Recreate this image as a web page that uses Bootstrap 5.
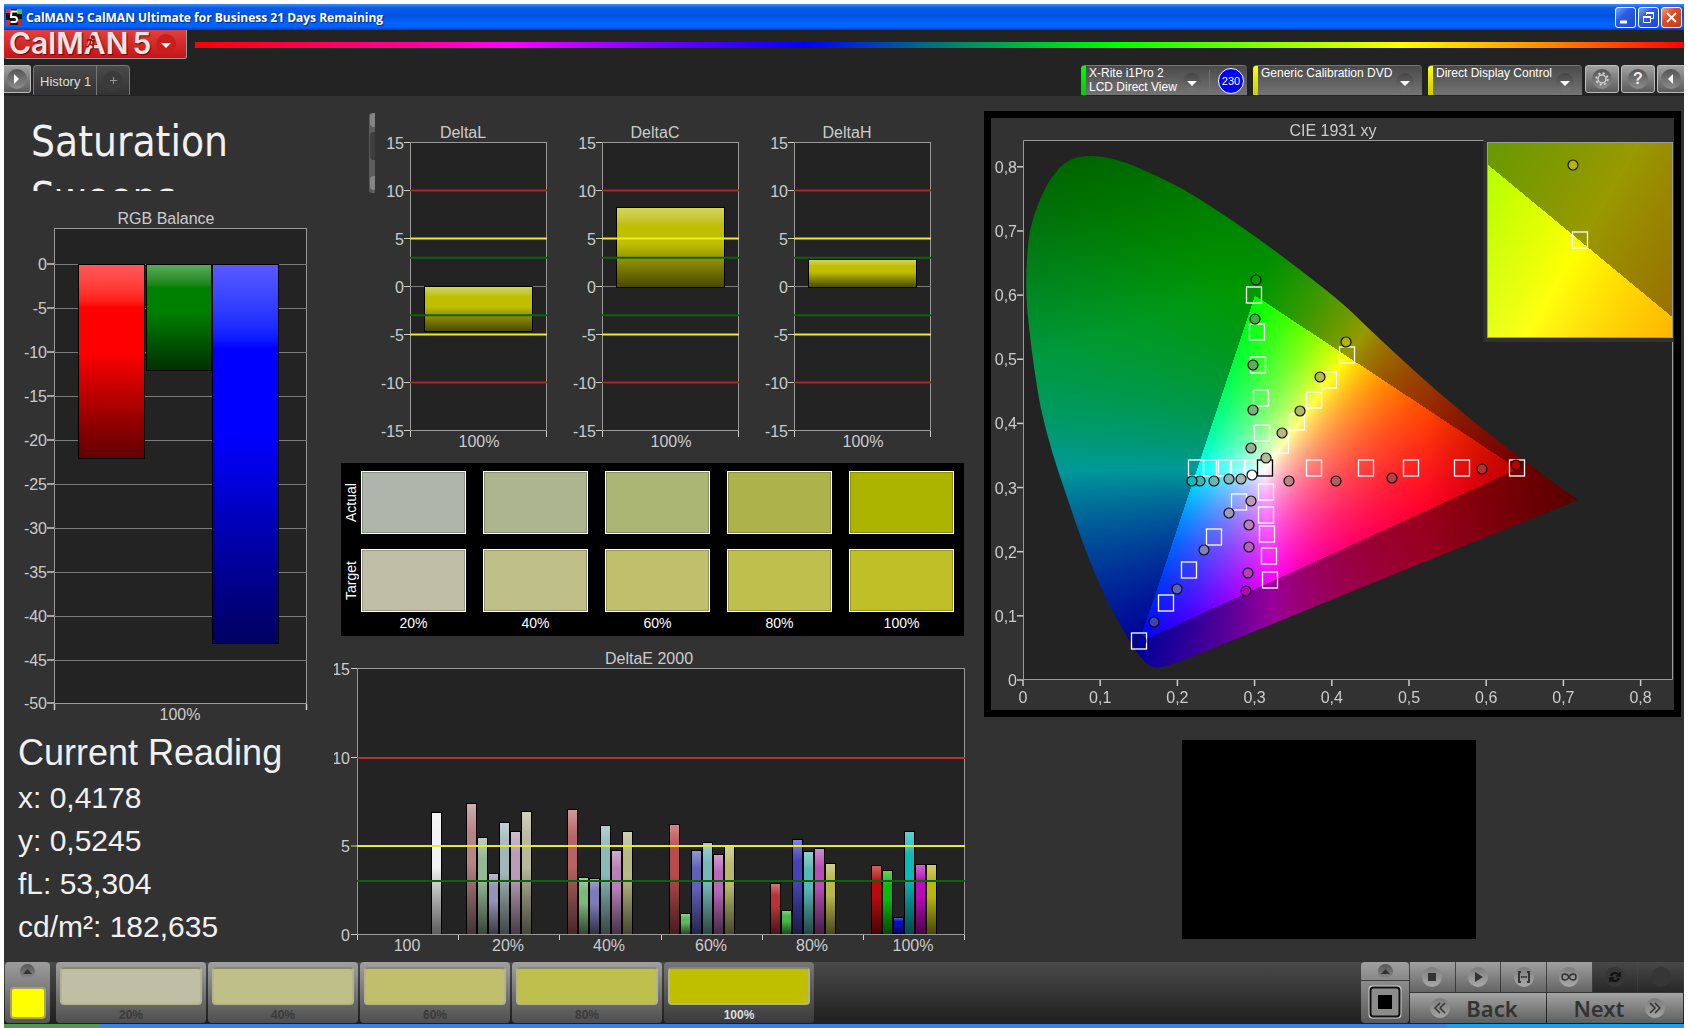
<!DOCTYPE html>
<html lang="en">
<head>
<meta charset="utf-8">
<meta name="viewport" content="width=device-width, initial-scale=1">
<title>CalMAN 5</title>
<link rel="stylesheet" href="https://cdn.jsdelivr.net/npm/bootstrap@5.3.0/dist/css/bootstrap.min.css">
<style>
  body { background: #fff; padding: 4px 4px 0 4px; font-family: "Liberation Sans", Arial, sans-serif; color: #eee; }
  button { border: 0; padding: 0; color: inherit; font-family: inherit; }
  svg { display: block; }
  .app-shell { background: #323232; min-height: calc(100vh - 4px); }
  .gap-hair { column-gap: 1px; }
  .gap-thin { column-gap: 2px; }

  .title-bar { height: 26px; padding: 0 2px; background: linear-gradient(#3d8df7 0, #0a5cea 15%, #0053e1 45%, #0066ff 75%, #0062fb 88%, #003bc4 100%); }
  .title-text { font: 700 12px/20px "Open Sans", sans-serif; margin: 2px 0 0 4px; color: #fff; text-shadow: 1px 1px 1px #0a2a80; }
  .win-btn { width: 21px; height: 21px; border: 1px solid #fff; border-radius: 3px; background: linear-gradient(135deg, #7ba3f5, #2a5be0 40%, #1c4bd0); }
  .win-close { background: linear-gradient(135deg, #f0a080, #dc4c26 40%, #c43c14); }

  .app-header { background: #232323; height: 66px; padding-bottom: 1px; }
  .logo-btn { width: 183px; height: 29px; background: linear-gradient(#e04040, #c81414); border: 1px solid #999; border-width: 0 1px 1px 0; border-radius: 0 0 3px 3px; overflow: hidden; padding: 0 5px; }
  .logo-text { font: 600 30px/26px Inter, sans-serif; color: #e6e6e6; text-shadow: 1px 1px 1px #700; margin-top: -3px; }
  .logo-figure { left: 80px; top: 5px; }
  .spectrum { height: 6px; margin-top: 12px; background: linear-gradient(90deg, #f00 0, #f0a 16%, #f0f 21%, #60f 32%, #00f 41%, #077 50%, #0f0 62%, #8f0 72%, #ff0 81%, #f80 91%, #f00 100%); }
  .tab-row { height: 30px; }
  .tool-btn { width: 34px; height: 28px; border: 1px solid #bbb; border-radius: 3px; background: linear-gradient(#a0a0a0, #5c5c5c); }
  .edge-left { width: 27px; border-left: 0; border-radius: 0 3px 3px 0; }
  .edge-right { width: 27px; border-right: 0; border-radius: 3px 0 0 3px; }
  .round-icon { width: 20px; height: 20px; border-radius: 50%; background: linear-gradient(#555, #8c8c8c); display: flex; align-items: center; justify-content: center; }
  .tab-box { background: linear-gradient(#4a4a4a, #333); border: 1px solid #777; border-width: 1px 1px 0 1px; border-radius: 4px 4px 0 0; margin-left: 2px; width: 97px; }
  .tab-name { font-size: 13px; padding: 2px 6px 0; background: none; border-right: 1px solid #777; width: 63px; white-space: nowrap; color: #ddd; }
  .tab-add { background: none; flex: 1; }
  .tab-add .round-icon { background: #3a3a3a; color: #999; }
  .device-box { background: linear-gradient(#4a4a4a, #747474); border-radius: 4px 4px 0 0; border-top: 1px solid #777; font-size: 12px; line-height: 14px; color: #fff; text-align: left; }
  .device-box .round-icon { width: 18px; height: 18px; background: linear-gradient(#444, #757575); margin-top: 7px; padding-top: 3px; }
  .device-led { width: 5px; align-self: stretch; border-radius: 3px 0 0 0; margin-right: 3px; }
  .led-green { background: linear-gradient(#0f0, #0c0); }
  .led-yellow { background: linear-gradient(#ff0, #cc0); }
  .device-open { background: none; text-align: left; display: flex; flex: 1; line-height: 14px; white-space: nowrap; }
  .dev-a { width: 166px; } .dev-b { width: 169px; margin-left: 6px; } .dev-c { width: 154px; margin-left: 6px; }
  .reading-dot { width: 26px; height: 26px; border-radius: 50%; background: #00f; border: 1px solid #fff; font-size: 11px; line-height: 24px; text-align: center; margin: 2px 3px 0 0; }
  .tool-set { margin-left: 3px; }

  .col-left { flex: 330 1 0; min-width: 0; } .col-mid { flex: 640 1 0; min-width: 0; } .col-right { flex: 710 1 0; min-width: 0; padding-top: 15px; }
  .page-title { font: 400 42px/56px "DejaVu Sans Condensed", "DejaVu Sans", sans-serif; height: 95px; padding: 18px 0 0 27px; overflow: hidden; margin: 0; color: #f0f0f0; }
  .rgb-chart { margin-top: 14px; }
  .reading h2 { font-size: 36px; line-height: 46px; margin: 0; }
  .reading { padding-left: 14px; color: #f0f0f0; }
  .reading p { font-size: 30px; line-height: 43px; margin: 0; }
  .scroll-track { width: 6px; height: 80px; background: #5c5c5c; border-radius: 3px 0 0 3px; margin: 13px 1px 0 35px; }
  .scroll-track i { display: block; width: 5px; margin-left: 1px; border-radius: 4px 0 0 4px; background: #858585; height: 14px; }
  .scroll-track i:nth-child(2) { background: #3e3e3e; height: 28px; margin: 5px 0 16px 1px; }
  .delta-cell { flex: 192 1 0; }
  .delta-tail { flex: 22 1 0; }

  .swatch-panel { background: #000; margin: 4px 10px 7px 7px; padding: 8px 10px 0 0; color: #fff; font-size: 14px; }
  .swatch-line { display: flex; gap: 17px; }
  .swatch-target { margin-top: 15px; }
  .swatch-name { width: 20px; margin-right: -17px; writing-mode: vertical-rl; transform: rotate(180deg); text-align: center; line-height: 20px; }
  .swatch-chip { flex: 1; height: 63px; border: 1px solid #fff; box-shadow: inset 0 0 0 1px #0003; }
  .swatch-cap { flex: 1; text-align: center; line-height: 23px; height: 24px; }

  .cie-panel { border: 7px solid #000; position: relative; margin: 0 3px 0 10px; }
  .cie-panel canvas { position: absolute; left: 0; top: 0; width: 100%; height: 100%; }
  .cie-panel svg { position: relative; }
  .pattern-view { width: 294px; height: 199px; background: #000; margin: 23px auto 0; }

  .dock { background: linear-gradient(#4a4a4a, #1f1f1f); padding: 0 1px; height: 62px; }
  .dock-left { width: 45px; height: 61px; border-radius: 4px; background: linear-gradient(#9c9c9c, #555); padding: 2px 5px 0; margin-right: 6px; }
  .dock-left .round-icon, .stop-head .round-icon { width: 15px; height: 15px; }
  .current-chip { width: 36px; height: 32px; border: 2px solid #aaa55a; border-radius: 4px; background: #ff0; margin-top: 8px; }
  .level-btn { width: 150px; height: 61px; border-radius: 4px; background: linear-gradient(#a0a0a0, #4e4e4e); font-size: 12px; font-weight: 700; color: #3a3a3a; padding: 5px 4px 0; margin-right: 2px; line-height: 20px; }
  .level-btn span { display: block; height: 38px; border-radius: 4px; border: 2px solid #b4b48c; border-top-color: #8a8a68; }
  .level-on { background: linear-gradient(#777, #3a3a3a); color: #ddd; }
  .stop-block { width: 48px; margin-right: 1px; }
  .stop-head { height: 18px; background: linear-gradient(#a0a0a0, #888); border-radius: 4px 4px 0 0; }
  .stop-body { height: 42px; margin-top: 1px; background: linear-gradient(#8c8c8c, #5a5a5a); border-radius: 0 0 4px 4px; }
  .media-col { width: 273px; gap: 1px; }
  .media-btn { flex: 1; height: 30px; background: linear-gradient(#a0a0a0, #646464); }
  .media-btn .round-icon { background: linear-gradient(#7c7c7c, #aaa); }
  .media-off { background: linear-gradient(#484848, #282828); }
  .media-off .round-icon { background: #363636; }
  .nav-btn { flex: 1; height: 30px; background: linear-gradient(#a4a4a4, #5e5e5e); color: #333; font: 600 22px/28px "Noto Sans", sans-serif; }
  .nav-btn .round-icon { background: linear-gradient(#7c7c7c, #a4a4a4); }
  .nav-back { gap: 16px; padding-right: 8px; }
  .nav-next { gap: 20px; padding-left: 8px; }
  .task-strip { height: 4px; background: linear-gradient(90deg, #4f9a4f 96px, #3b82e8 96px 1443px, #1aa0f0 1443px); }
</style>
<script src="https://cdn.jsdelivr.net/npm/bootstrap@5.3.0/dist/js/bootstrap.bundle.min.js"></script>
</head>
<body>
<div class="app-shell d-flex flex-column">
  <header>
    <div class="title-bar d-flex align-items-center">
      <svg width="16" height="16" viewBox="0 0 16 16" aria-hidden="true"><rect width="16" height="16" fill="#111"/><path d="M0 0h5v4H0z" fill="#e33"/><path d="M11 0h5v5h-5z" fill="#3c3"/><path d="M0 11h4v5H0z" fill="#c33"/><path d="M12 10h4v6h-4z" fill="#c22"/><path d="M11.500 2.500H5.500L5 8h3.500q2.500 0 2.500 2.500T8.500 13H4.500" fill="none" stroke="#fff" stroke-width="2"/></svg>
      <h1 class="title-text flex-grow-1">CalMAN 5 CalMAN Ultimate for Business 21 Days Remaining</h1>
      <div class="d-flex gap-thin">
        <button class="win-btn" aria-label="Minimize"><svg width="19" height="19"><path d="M4 14h7" stroke="#fff" stroke-width="3"/></svg></button>
        <button class="win-btn" aria-label="Restore"><svg width="19" height="19" fill="none" stroke="#fff"><path d="M7.500 7V4.500h7v6H12"/><path d="M7 5h8" stroke-width="2"/><path d="M4.500 8.500h7v6h-7z"/><path d="M4 9h8" stroke-width="2"/></svg></button>
        <button class="win-btn win-close" aria-label="Close"><svg width="19" height="19"><path d="M5 5l9 9M14 5l-9 9" stroke="#fff" stroke-width="2"/></svg></button>
      </div>
    </div>
    <div class="app-header d-flex flex-column">
      <div class="d-flex">
        <button class="logo-btn d-flex align-items-center position-relative" aria-label="CalMAN 5 menu">
          <span class="logo-text">CalMAN</span><span class="logo-text ms-1">5</span>
          <svg class="logo-figure position-absolute" width="14" height="15" viewBox="0 0 12 14" fill="none" stroke="#a01010" stroke-width="1.500"><circle cx="7.500" cy="2" r="1" fill="#a01010"/><path d="M2 5l4-1 2 2 2-1M6 4L5 8l3 2v3M5 8l-2 3H1"/></svg>
          <svg class="ms-auto me-1" width="22" height="22"><circle cx="11" cy="11" r="10" fill="#c81e1e"/><path d="M6 10h10l-5 5z" fill="#fff"/></svg>
        </button>
        <div class="spectrum flex-grow-1 ms-2"></div>
      </div>
      <div class="tab-row d-flex mt-auto">
        <button class="tool-btn edge-left d-flex align-items-center justify-content-center" aria-label="Expand left"><span class="round-icon"><svg width="8" height="10"><path d="M1 0l5 5-5 5z" fill="#fff"/></svg></span></button>
        <div class="tab-box d-flex">
          <button class="tab-name">History 1</button>
          <button class="tab-add d-flex align-items-center justify-content-center" aria-label="Add tab"><span class="round-icon"><svg width="7" height="7"><path d="M3.500 0v7M0 3.500h7" stroke="#999"/></svg></span></button>
        </div>
        <div class="d-flex ms-auto">
          <div class="device-box dev-a d-flex">
            <span class="device-led led-green"></span>
            <button class="device-open">X-Rite i1Pro 2<br>LCD Direct View<span class="round-icon ms-auto me-2"><svg width="10" height="6"><path d="M0 0h10L5 5z" fill="#fff"/></svg></span></button>
            <span class="border-start border-secondary my-1 me-2"></span><span class="reading-dot">230</span>
          </div>
          <div class="device-box dev-b d-flex"><span class="device-led led-yellow"></span>
            <button class="device-open">Generic Calibration DVD<span class="round-icon ms-auto me-2"><svg width="10" height="6"><path d="M0 0h10L5 5z" fill="#fff"/></svg></span></button></div>
          <div class="device-box dev-c d-flex"><span class="device-led led-yellow"></span>
            <button class="device-open">Direct Display Control<span class="round-icon ms-auto me-2"><svg width="10" height="6"><path d="M0 0h10L5 5z" fill="#fff"/></svg></span></button></div>
          <div class="tool-set d-flex gap-thin">
            <button class="tool-btn d-flex align-items-center justify-content-center" aria-label="Settings"><span class="round-icon"><svg width="16" height="16" viewBox="-8 -8 16 16" fill="none" stroke="#ccc"><circle r="4" stroke-width="1.500"/><circle r="5.700" stroke-width="2" stroke-dasharray="2.230 2.230"/></svg></span></button>
            <button class="tool-btn d-flex align-items-center justify-content-center fw-bold" aria-label="Help"><span class="round-icon">?</span></button>
            <button class="tool-btn edge-right d-flex align-items-center justify-content-center" aria-label="Collapse right"><span class="round-icon"><svg width="8" height="10"><path d="M6 0L1 5l5 5z" fill="#fff"/></svg></span></button>
          </div>
        </div>
      </div>
    </div>
  </header>

  <main class="d-flex flex-grow-1">
    <section class="col-left">
      <h2 class="page-title">Saturation<br>Sweeps</h2>
      <div id="rgbChart" class="rgb-chart"></div>
      <div class="reading">
        <h2>Current Reading</h2>
        <p>x: 0,4178</p><p>y: 0,5245</p><p>fL: 53,304</p><p>cd/m²: 182,635</p>
      </div>
    </section>

    <section class="col-mid">
      <div class="d-flex pt-1">
        <div class="scroll-track"><i></i><i></i><i></i></div>
        <div class="delta-cell" id="deltaL"></div>
        <div class="delta-cell" id="deltaC"></div>
        <div class="delta-cell" id="deltaH"></div>
        <div class="delta-tail"></div>
      </div>
      <div class="swatch-panel" id="swatches"></div>
      <div id="deltaE"></div>
    </section>

    <section class="col-right">
      <div class="cie-panel"><canvas id="cieCanvas" width="683" height="592"></canvas><div id="cieChart"></div></div>
      <div class="pattern-view"></div>
    </section>
  </main>

  <footer>
    <div class="dock d-flex">
      <button class="dock-left d-flex flex-column align-items-center" aria-label="Current color"><span class="round-icon"><svg width="9" height="5"><path d="M0 5h9L4.500 0z" fill="#333"/></svg></span><span class="current-chip"></span></button>
      <div class="d-flex" id="levels"></div>
      <div class="d-flex ms-auto">
        <div class="stop-block">
          <button class="stop-head w-100 d-flex align-items-center justify-content-center" aria-label="Expand"><span class="round-icon"><svg width="9" height="5"><path d="M0 5h9L4.500 0z" fill="#333"/></svg></span></button>
          <button class="stop-body w-100 d-flex align-items-center justify-content-center" aria-label="Pattern window"><svg width="34" height="34"><rect x=".5" y=".5" width="33" height="33" rx="4" fill="#ccc"/><rect x="2.500" y="2.500" width="29" height="29" rx="3" fill="#8c8c8c" stroke="#111" stroke-width="2"/><path d="M10 10h14v14H10z" fill="#000"/></svg></button>
        </div>
        <div class="media-col d-flex flex-column">
          <div class="d-flex gap-hair">
            <button class="media-btn d-flex align-items-center justify-content-center" aria-label="Stop"><span class="round-icon"><svg width="8" height="8"><path d="M0 0h8v8H0z" fill="#333"/></svg></span></button>
            <button class="media-btn d-flex align-items-center justify-content-center" aria-label="Play"><span class="round-icon"><svg width="9" height="10"><path d="M1 0l8 5-8 5z" fill="#333"/></svg></span></button>
            <button class="media-btn d-flex align-items-center justify-content-center" aria-label="Read series"><span class="round-icon"><svg width="14" height="12" fill="none" stroke="#333" stroke-width="2"><path d="M4 1H2v10h2M10 1h2v10h-2"/><path d="M4 6h6" stroke-dasharray="1.500 .7"/></svg></span></button>
            <button class="media-btn d-flex align-items-center justify-content-center" aria-label="Continuous"><span class="round-icon"><svg width="16" height="8" fill="none" stroke="#333" stroke-width="1.500"><path d="M8 4C6 0 1 0 1 4s5 4 7 0 7-4 7 0-5 4-7 0z"/></svg></span></button>
            <button class="media-btn media-off d-flex align-items-center justify-content-center" aria-label="Refresh"><span class="round-icon"><svg width="12" height="12" fill="none" stroke="#111" stroke-width="2"><path d="M2 5q1-3 4-3t4 2M10 7q-1 3-4 3T2 8"/><path d="M11 1v4H7M1 11V7h4" stroke-width="1.500"/></svg></span></button>
            <button class="media-btn media-off d-flex align-items-center justify-content-center" aria-label="Record"><span class="round-icon"></span></button>
          </div>
          <div class="d-flex gap-hair">
            <button class="nav-btn nav-back d-flex align-items-center justify-content-center"><span class="round-icon"><svg width="12" height="12" fill="none" stroke="#333" stroke-width="1.500"><path d="M6 1L1 6l5 5M11 1L6 6l5 5"/></svg></span>Back</button>
            <button class="nav-btn nav-next d-flex align-items-center justify-content-center">Next<span class="round-icon"><svg width="12" height="12" fill="none" stroke="#333" stroke-width="1.500"><path d="M1 1l5 5-5 5M6 1l5 5-5 5"/></svg></span></button>
          </div>
        </div>
      </div>
    </div>
    <div class="task-strip"></div>
  </footer>
</div>

<script>
let gid = 0;
const text = (x, y, s, anchor = 'middle') => `<text x="${x}" y="${y}" text-anchor="${anchor}" fill="#ccc" font-size="16">${s}</text>`;
const line = (x1, y1, x2, y2, c = '#999', w = 1) => `<path d="M${x1} ${y1}L${x2} ${y2}" stroke="${c}" stroke-width="${w}"/>`;
const wrap = (box, label, body) => `<svg viewBox="${box}" width="100%" role="img" aria-label="${label}" font-family="Liberation Sans, Arial, sans-serif">${body}</svg>`;
const frame = (x, y, w, h) => `<rect x="${x}" y="${y}" width="${w}" height="${h}" fill="#232323" stroke="#999"/>`;

// Glossy bar: light at the top, base colour in the middle, dark at the bottom.
function bar(x, y, w, h, color) {
  const id = 'g' + gid++;
  return `<defs><linearGradient id="${id}" x1="0" y1="0" x2="0" y2="1"><stop offset="0" stop-color="color-mix(in srgb, ${color} 65%, white)"/><stop offset=".22" stop-color="${color}"/><stop offset=".45" stop-color="${color}"/><stop offset="1" stop-color="color-mix(in srgb, ${color} 38%, black)"/></linearGradient></defs>
  <rect x="${x + .5}" y="${y + .5}" width="${w - 1}" height="${h - 1}" fill="url(#${id})" stroke="#000"/>`;
}
const put = (id, html) => document.getElementById(id).innerHTML = html;

// RGB balance
(function () {
  let s = frame(50.5, 8.5, 252, 475).replace('50.5', '54.5');
  for (let v = 0; v >= -50; v -= 5) {
    const y = Math.round(44 - v * 8.79) + .5;
    if (v > -50) s += line(54, y, 307, y, '#7c7c7c');
    s += line(47, y - .5, 54, y - .5, '#ccc', 1.5) + text(47, y + 5, v, 'end');
  }
  s += line(54.5, 484, 54.5, 490, '#ccc', 1.5) + line(306.5, 484, 306.5, 490, '#ccc', 1.5);
  s += bar(78, 44, 67, 195, '#ff0000') + bar(146, 44, 66, 107, '#008000') + bar(212, 44, 67, 380, '#0000ff');
  s += text(166, 4, 'RGB Balance') + text(180, 500, '100%');
  put('rgbChart', wrap('4 -15 330 525', 'RGB Balance', s));
})();

// Delta L / C / H
function delta(id, name, top, bottom) {
  let s = frame(34.5, 42.5, 136, 288) + line(34, 186.5, 171, 186.5, '#7c7c7c');
  s += bar(48, top, 109, bottom - top, '#bfbf00');
  [[10, '#b22222'], [5, '#eeee20'], [3, '#106010']].forEach(([v, c]) => {
    s += line(34, 186.5 - v * 9.6, 171, 186.5 - v * 9.6, c, 2) + line(34, 186.5 + v * 9.6, 171, 186.5 + v * 9.6, c, 2);
  });
  for (let v = 15; v >= -15; v -= 5) {
    const y = 186.5 - v * 9.6;
    s += line(28, y, 34, y, '#ccc') + text(28, y + 6, v, 'end');
  }
  s += line(34.5, 331, 34.5, 337, '#ccc') + line(170.5, 331, 170.5, 337, '#ccc');
  s += text(87, 38, name) + text(103, 347, '100%');
  put(id, wrap('0 0 192 359', name, s));
}
delta('deltaL', 'DeltaL', 186, 232);
delta('deltaC', 'DeltaC', 107, 188);
delta('deltaH', 'DeltaH', 159, 188);

// Actual / target swatches
const caps = ['20%', '40%', '60%', '80%', '100%'];
const actual = ['#adb5aa', '#adb58f', '#abb574', '#adb34a', '#adb400'];
const target = ['#bfbfa5', '#bfbf88', '#bfbf6c', '#bfbf4e', '#bfbf28'];
const chips = (name, list, cls = '') => `<div class="swatch-line ${cls}"><span class="swatch-name">${name}</span>${list.map(c => `<span class="swatch-chip" style="background:${c}"></span>`).join('')}</div>`;
put('swatches', chips('Actual', actual) + chips('Target', target, 'swatch-target') +
  `<div class="swatch-line"><span class="swatch-name"></span>${caps.map(c => `<span class="swatch-cap">${c}</span>`).join('')}</div>`);

// Delta E 2000
(function () {
  const groups = [
    [[6, 813, '#f2f2f2']],
    [[0, 804, '#b88484'], [1, 838, '#94b894'], [2, 874, '#9494b8'], [3, 823, '#a0b8b8'], [4, 832, '#b89cb8'], [5, 812, '#b8b89c']],
    [[0, 810, '#b86464'], [1, 878, '#7cb87c'], [2, 879, '#7c7cb8'], [3, 826, '#8cb8b8'], [4, 851, '#b880b8'], [5, 832, '#b8b880']],
    [[0, 825, '#b84c4c'], [1, 914, '#60b860'], [2, 851, '#6060b8'], [3, 843, '#74b8b8'], [4, 855, '#b868b8'], [5, 847, '#b8b868']],
    [[0, 884, '#b83434'], [1, 911, '#44b844'], [2, 840, '#4444b8'], [3, 852, '#54b8b8'], [4, 849, '#b84cb8'], [5, 864, '#b8b84c']],
    [[0, 866, '#b80c0c'], [1, 871, '#0cb80c'], [2, 918, '#0c0cb8'], [3, 832, '#0cb8b8'], [4, 865, '#b80cb8'], [5, 865, '#b8b80c']]];
  let s = frame(357.5, 669.5, 607, 266);
  groups.forEach((g, i) => {
    const gx = 357 + Math.round(101.200 * i);
    g.forEach(([n, top, c]) => s += bar(gx + 8 + n * 11, top, 11, 936 - top, c));
    s += line(gx + .5, 936, gx + .5, 941, '#ccc') + text(gx + 50, 952, i ? caps[i - 1] : '100');
  });
  s += line(964.5, 936, 964.5, 941, '#ccc') + line(357, 935.5, 965, 935.5);
  s += line(357, 759, 965, 759, '#c03030', 2) + line(357, 847, 965, 847, '#e8e830', 2) + line(357, 882, 965, 882, '#106010', 2);
  [[15, 669.5], [10, 758.5], [5, 847], [0, 935.5]].forEach(([v, y]) => s += line(351, y, 357, y, '#ccc') + text(350, y + 6, v, 'end'));
  put('deltaE', wrap('334 644 640 316', 'DeltaE 2000', s + text(649, 665, 'DeltaE 2000')));
})();

// CIE 1931 chart: axes, targets and readings
const X = x => 1023 + 772 * x, Y = y => 680 - 641.5 * y;
(function () {
  let s = '<path d="M1023.5 680V140.5H1672.5V679.500H1023" fill="none" stroke="#999"/>';
  for (let i = 0; i <= 8; i++) {
    const lab = i ? '0,' + i : '0';
    s += line(1017, Y(i / 10), 1023, Y(i / 10), '#ccc', 1.5) + text(1017, Y(i / 10) + 6, lab, 'end');
    s += line(X(i / 10), 680, X(i / 10), 686, '#ccc', 1.5) + text(X(i / 10), 703, lab);
  }
  s += '<path d="M1485.500 140v200h188" fill="none" stroke="#323232" stroke-width="4"/><path d="M1484 138h191v4h-191z" fill="#323232"/><rect x="1487.500" y="142.500" width="185" height="195" fill="none" stroke="#999"/>';
  const sq = [[1254, 295], [1257, 332], [1258, 365], [1261, 398], [1262, 433], [1196, 468], [1211, 468], [1224, 468], [1238, 468], [1252, 468], [1281, 445], [1297, 422], [1314, 400], [1329, 380], [1347, 355], [1314, 468], [1366, 468], [1411, 468], [1462, 468], [1517, 468], [1266, 492], [1266, 515], [1267, 534], [1269, 556], [1270, 580], [1239, 502], [1214, 537], [1189, 570], [1166, 603], [1139, 641], [1580, 240]];
  sq.forEach(([x, y]) => s += `<rect x="${x - 7.5}" y="${y - 8}" width="15" height="16" fill="none" stroke="#fff" stroke-width="1.300"/>`);
  s += '<rect x="1257.500" y="460" width="15" height="16" fill="none" stroke="#000" stroke-width="1.300"/>';
  const dots = [[1256, 280, '#00a000'], [1255, 319, '#3cb43c'], [1253, 365, '#5ab05a'], [1253, 410, '#7ab07a'], [1251, 448, '#96b096'],
    [1266, 458, '#b8b8a0'], [1282, 433, '#b8b484'], [1300, 411, '#b4b46a'], [1320, 377, '#b8b850'], [1346, 342, '#b4b400'],
    [1200, 481, '#40b4b4'], [1192, 481, '#10b8b8'], [1214, 481, '#6ab4b4'], [1229, 479, '#8cb4b4'], [1241, 479, '#a4b4b4'], [1252, 475, '#fff'],
    [1229, 513, '#9c9cb8'], [1204, 550, '#8080b8'], [1177, 589, '#6060b8'], [1154, 622, '#4040b8'], [1141, 641, '#0000b8'],
    [1251, 501, '#b89cb8'], [1249, 525, '#b880b8'], [1249, 547, '#b860b8'], [1248, 573, '#b440b4'], [1246, 591, '#b800b8'],
    [1289, 481, '#b88484'], [1336, 481, '#b45c5c'], [1392, 478, '#b44444'], [1482, 469, '#b83030'], [1516, 465, '#b80000'], [1573, 165, '#b8b400']];
  dots.forEach(([x, y, c]) => s += `<circle cx="${x}" cy="${y}" r="5" fill="${c}" stroke="#111" stroke-width="1.200"/>`);
  put('cieChart', wrap('991 118 683 592', 'CIE 1931 xy', s + text(1333, 136, 'CIE 1931 xy')));
})();

// CIE 1931 chart: chromaticity fill
(function () {
  const cv = document.getElementById('cieCanvas'), ctx = cv.getContext('2d');
  const inTri = (x, y) => {
    const side = (ax, ay, bx, by) => (bx - ax) * (y - ay) - (by - ay) * (x - ax);
    return side(.3, .6, .15, .06) >= 0 && side(.15, .06, .64, .33) >= 0 && side(.64, .33, .3, .6) >= 0;
  };
  function color(x, y) {
    const z = 1 - x - y;
    const c = [3.2406 * x - 1.5372 * y - .4986 * z, -.9689 * x + 1.8758 * y + .0415 * z, .0557 * x - .204 * y + 1.057 * z].map(v => Math.max(0, v));
    const m = Math.max(...c);
    let f = inTri(x, y) ? 1 : .6;
    f *= 1 - Math.max(0, x - .52) * 2.2;
    f *= 1 - 1.2 * Math.max(0, y - .6 + Math.max(0, .25 - x) * .4);
    return c.map(v => 255 * f * v / m);
  }
  function paint(w, h, toXY) {
    const off = document.createElement('canvas'); off.width = w; off.height = h;
    const o = off.getContext('2d'), img = o.createImageData(w, h);
    for (let j = 0; j < h; j++) for (let i = 0; i < w; i++) {
      const c = color(...toXY(i, j)), k = (j * w + i) * 4;
      img.data[k] = c[0]; img.data[k + 1] = c[1]; img.data[k + 2] = c[2]; img.data[k + 3] = 255;
    }
    o.putImageData(img, 0, 0);
    return off;
  }
  ctx.translate(-991, -118);
  ctx.fillStyle = '#232323'; ctx.fillRect(1023, 140, 650, 540);
  const p = [[1080, 156], [1065, 162], [1053, 175], [1043, 192], [1035, 212], [1029, 233], [1027, 257], [1026, 283], [1027, 310], [1032, 353], [1037, 387], [1041, 410], [1052, 453], [1067, 497], [1085, 550], [1105, 597], [1122, 628], [1132, 645], [1142, 659], [1150, 667], [1163, 668], [1222, 645], [1345, 594], [1578, 500], [1544, 476], [1454, 407], [1373, 333], [1345, 305], [1298, 268], [1255, 236], [1215, 209], [1182, 188], [1148, 172], [1125, 162], [1102, 156]];
  ctx.save(); ctx.beginPath();
  ctx.moveTo((p[0][0] + p[34][0]) / 2, 156);
  p.forEach((q, i) => {
    const n = p[(i + 1) % p.length];
    if (i === 23) { ctx.lineTo(q[0], q[1]); ctx.lineTo((q[0] + n[0]) / 2, (q[1] + n[1]) / 2); }
    else ctx.quadraticCurveTo(q[0], q[1], (q[0] + n[0]) / 2, (q[1] + n[1]) / 2);
  });
  ctx.clip();
  ctx.drawImage(paint(650, 540, (i, j) => [i / 772, (540 - j) / 641.5]), 1023, 140);
  ctx.restore();
  ctx.drawImage(paint(185, 195, (i, j) => [.4193 + (i - 92.5) / 3700, .5053 - (j - 98) / 3850]), 1488, 143);
})();

// Saturation level buttons
put('levels', caps.map((c, i) => `<button class="level-btn${i === 4 ? ' level-on' : ''}"><span style="background:${['#bfbfa5', '#bfbf88', '#bfbf6c', '#bfbf4e', '#bfbf00'][i]}"></span>${c}</button>`).join(''));
</script>
</body>
</html>
